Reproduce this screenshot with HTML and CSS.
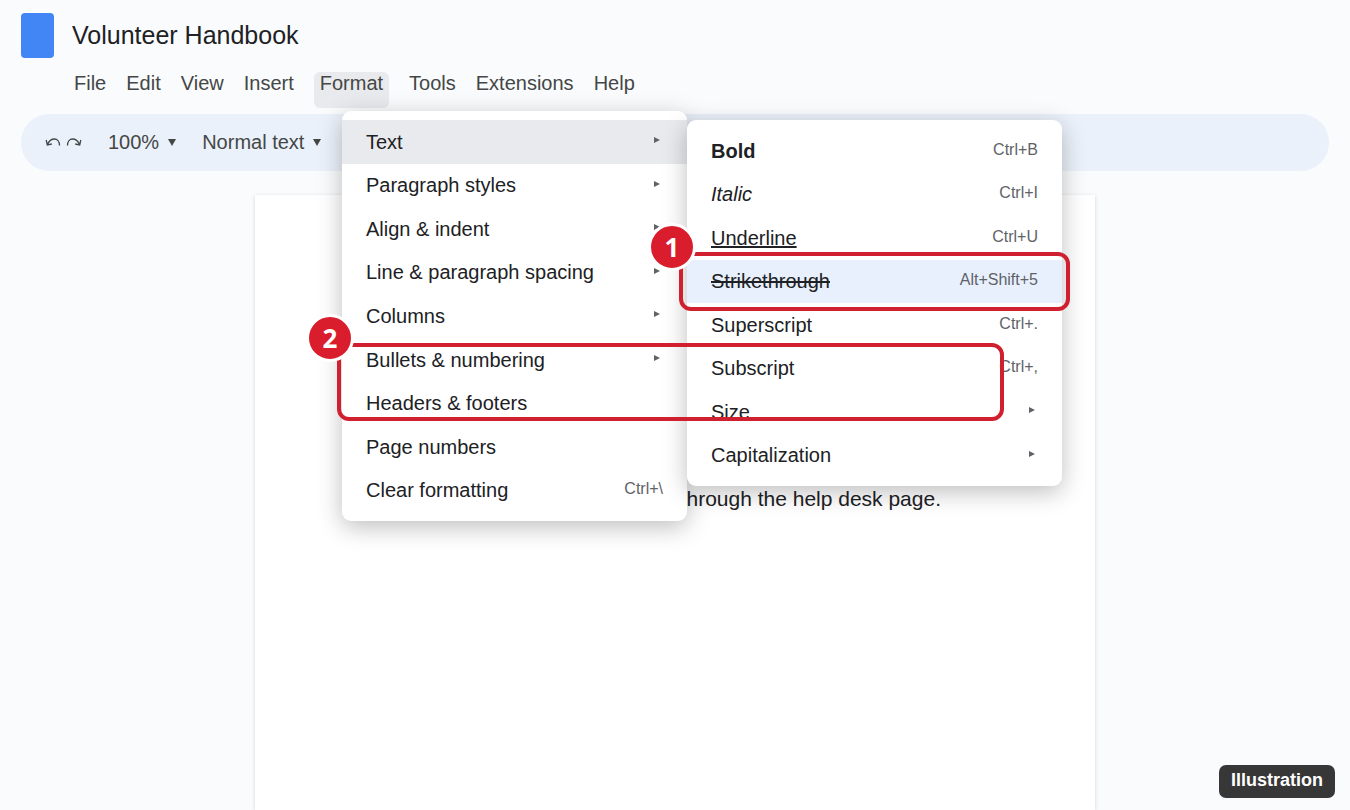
FILE: index.html
```html
<!DOCTYPE html>
<html lang="en">
<head>
<meta charset="utf-8">
<title>Volunteer Handbook</title>
<link rel="stylesheet" href="styles.css">
</head>
<body>
<div class="app">
  <header class="header">
    <div class="brand">
      <span class="logo"></span>
      <h1 class="title">Volunteer Handbook</h1>
    </div>
    <nav class="menubar">
      <button class="menubar-item">File</button>
      <button class="menubar-item">Edit</button>
      <button class="menubar-item">View</button>
      <button class="menubar-item">Insert</button>
      <button class="menubar-item active" aria-expanded="true">Format</button>
      <button class="menubar-item">Tools</button>
      <button class="menubar-item">Extensions</button>
      <button class="menubar-item">Help</button>
    </nav>
  </header>

  <div class="toolbar">
    <div class="history">
      <button class="tool" aria-label="Undo"><svg width="16" height="12" viewBox="0 0 16 12"><path d="M14.500 9.500C14.500 5 12 3 9.500 3C6.500 3 4 5 2.500 8.500M1.200 4L2.300 8.900L6.800 8"/></svg></button>
      <button class="tool" aria-label="Redo"><svg width="16" height="12" viewBox="0 0 16 12"><path d="M1.500 9.500C1.500 5 4 3 6.500 3C9.500 3 12 5 13.500 8.500M14.800 4L13.700 8.900L9.200 8"/></svg></button>
    </div>
    <button class="tool">100%<svg class="caret" width="8" height="8" viewBox="0 0 8 8"><path d="M0 1H8L4 8Z"/></svg></button>
    <button class="tool">Normal text<svg class="caret" width="8" height="8" viewBox="0 0 8 8"><path d="M0 1H8L4 8Z"/></svg></button>
  </div>

  <main class="page">
    <p class="body-text">through the help desk page.</p>
  </main>
</div>

<div class="menu menu-format" role="menu">
  <button class="item current" role="menuitem">Text<svg class="arrow" width="6" height="6" viewBox="0 0 6 6"><path d="M0 0L6 3L0 6Z"/></svg></button>
  <button class="item" role="menuitem">Paragraph styles<svg class="arrow" width="6" height="6" viewBox="0 0 6 6"><path d="M0 0L6 3L0 6Z"/></svg></button>
  <button class="item" role="menuitem">Align &amp; indent<svg class="arrow" width="6" height="6" viewBox="0 0 6 6"><path d="M0 0L6 3L0 6Z"/></svg></button>
  <button class="item" role="menuitem">Line &amp; paragraph spacing<svg class="arrow" width="6" height="6" viewBox="0 0 6 6"><path d="M0 0L6 3L0 6Z"/></svg></button>
  <button class="item" role="menuitem">Columns<svg class="arrow" width="6" height="6" viewBox="0 0 6 6"><path d="M0 0L6 3L0 6Z"/></svg></button>
  <button class="item" role="menuitem">Bullets &amp; numbering<svg class="arrow" width="6" height="6" viewBox="0 0 6 6"><path d="M0 0L6 3L0 6Z"/></svg></button>
  <button class="item" role="menuitem">Headers &amp; footers</button>
  <button class="item" role="menuitem">Page numbers</button>
  <button class="item" role="menuitem">Clear formatting<kbd class="shortcut">Ctrl+\</kbd></button>
</div>

<div class="menu menu-text" role="menu">
  <button class="item" role="menuitem"><b>Bold</b><kbd class="shortcut">Ctrl+B</kbd></button>
  <button class="item" role="menuitem"><i>Italic</i><kbd class="shortcut">Ctrl+I</kbd></button>
  <button class="item" role="menuitem"><u>Underline</u><kbd class="shortcut">Ctrl+U</kbd></button>
  <button class="item selected" role="menuitem"><s>Strikethrough</s><kbd class="shortcut">Alt+Shift+5</kbd></button>
  <button class="item" role="menuitem">Superscript<kbd class="shortcut">Ctrl+.</kbd></button>
  <button class="item" role="menuitem">Subscript<kbd class="shortcut">Ctrl+,</kbd></button>
  <button class="item" role="menuitem">Size<svg class="arrow" width="6" height="6" viewBox="0 0 6 6"><path d="M0 0L6 3L0 6Z"/></svg></button>
  <button class="item" role="menuitem">Capitalization<svg class="arrow" width="6" height="6" viewBox="0 0 6 6"><path d="M0 0L6 3L0 6Z"/></svg></button>
</div>

<div class="callout callout-one"><span class="badge">1</span></div>
<div class="callout callout-two"><span class="badge">2</span></div>
<div class="tag">Illustration</div>
</body>
</html>
```
FILE: styles.css
```css
* { box-sizing: border-box; }

body {
  margin: 0;
  background: #f9fbfd;
  color: #202124;
  font-family: "Liberation Sans", Arial, sans-serif;
  font-size: 20px;
}

button {
  padding: 0;
  border: 0;
  background: none;
  color: inherit;
  font: inherit;
}

.app {
  display: flex;
  flex-direction: column;
  min-height: 100vh;
  padding: 12px 21px 0;
}

.brand {
  display: flex;
  align-items: center;
  gap: 18px;
}

.logo {
  width: 33px;
  height: 45px;
  margin-top: 1px;
  border-radius: 4px;
  background: #4285f4;
}

.title {
  margin: 0;
  font-size: 25px;
  font-weight: 400;
  line-height: 30px;
}

.menubar {
  display: flex;
  gap: 20px;
  margin-top: 14px;
  padding-left: 53px;
  color: #444746;
}

.menubar-item {
  display: flex;
  height: 36px;
  line-height: 22px;
}

.menubar-item.active {
  padding: 0 6px;
  border-radius: 6px;
  background: #e8eaed;
}

.toolbar {
  display: flex;
  align-items: center;
  gap: 26px;
  height: 57px;
  margin-top: 6px;
  padding: 0 24px 2px;
  border-radius: 29px;
  background: #ebf1fa;
  color: #444746;
}

.history { display: flex; gap: 5px; }

.tool {
  display: flex;
  align-items: center;
  gap: 9px;
  line-height: 24px;
}

.history path {
  fill: none;
  stroke: #444746;
  stroke-width: 1.300;
}

.caret { fill: #444746; }

.page {
  flex: 1;
  width: 840px;
  max-width: 100%;
  margin: 24px auto 0;
  padding: 288px 154px 0;
  background: #fff;
  box-shadow: 0 1px 4px rgba(0, 0, 0, 0.16);
}

.body-text {
  margin: 0;
  font-size: 21px;
  line-height: 32px;
  text-align: right;
}

.menu {
  position: absolute;
  display: grid;
  grid-auto-rows: 1fr;
  padding: 9px 0;
  border-radius: 9px;
  background: #fff;
  box-shadow: 0 6px 24px rgba(0, 0, 0, 0.26);
}

.menu-format {
  top: 111px;
  left: 342px;
  width: 345px;
  min-height: 410px;
}

.menu-text {
  top: 120px;
  left: 687px;
  width: 375px;
  min-height: 366px;
}

.item {
  display: flex;
  align-items: center;
  justify-content: space-between;
  padding: 0 24px;
  line-height: 24px;
  text-align: left;
}

.item.current { background: #e8eaed; }
.item.selected { background: #e8f0fe; }

.shortcut {
  padding-bottom: 2px;
  color: #5f6368;
  font-family: inherit;
  font-size: 16px;
}

.arrow {
  margin: 0 3px 3px 0;
  fill: #5f6368;
}

.callout {
  position: absolute;
  border: 4px solid #d01f2e;
  border-radius: 12px;
}

.callout-one {
  top: 252px;
  left: 679px;
  width: 391px;
  height: 59px;
}

.callout-two {
  top: 343px;
  left: 337px;
  width: 667px;
  height: 78px;
}

.badge {
  position: absolute;
  top: -33px;
  left: -35px;
  display: grid;
  place-items: center;
  width: 48px;
  height: 48px;
  border: 3px solid #fff;
  border-radius: 50%;
  background: #d91d2c;
  color: #fff;
  font-family: "Open Sans", "Liberation Sans", sans-serif;
  font-size: 26px;
  font-weight: 700;
}

.tag {
  position: fixed;
  right: 15px;
  bottom: 12px;
  padding: 0 12px 3px;
  border-radius: 7px;
  background: #373737;
  color: #fff;
  font-size: 18px;
  font-weight: 700;
  line-height: 30px;
}
```
